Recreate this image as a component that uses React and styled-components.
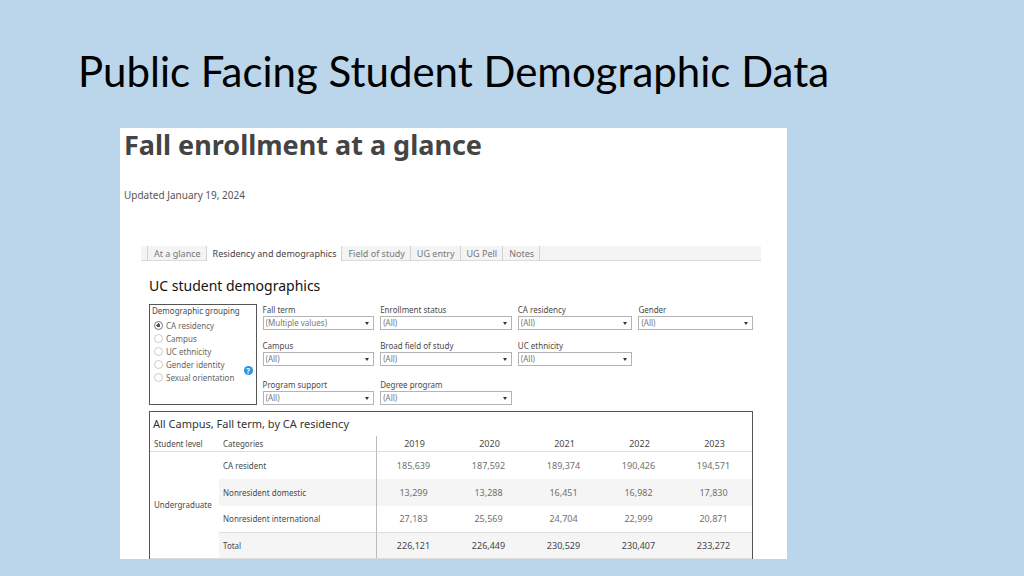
import React from "react";
import styled, { createGlobalStyle } from "styled-components";

const GlobalStyle = createGlobalStyle`
  * { box-sizing: border-box; }
  body {
    margin: 0;
    background: #bbd5eb;
    color: #4a4a4a;
    font-family: "Noto Sans", "Open Sans", sans-serif;
    font-size: 9px;
    line-height: 12px;
  }
`;

const Slide = styled.main`
  min-height: 100vh;
  padding: 39px 0 17px;
`;

const SlideTitle = styled.h1`
  margin: 0 78px 25px;
  color: #000;
  font-family: Lato, "Noto Sans", sans-serif;
  font-size: 42px;
  font-weight: 400;
  line-height: 64px;
`;

const Card = styled.article`
  margin: 0 237px 0 120px;
  background: #fff;
`;

const CardHeader = styled.header`
  padding: 0 4px;
`;

const CardTitle = styled.h2`
  margin: 0 0 26px;
  color: #444;
  font-size: 27px;
  font-weight: 700;
  line-height: 34px;
`;

const Updated = styled.p`
  margin: 0;
  color: #555;
  font-size: 10px;
  line-height: 14px;
`;

const Tabs = styled.nav`
  display: flex;
  height: 15px;
  margin: 44px 26px 0 21px;
  padding-left: 6px;
  background: #f4f4f4;
  border-bottom: 1px solid #dcdcdc;
`;

const Tab = styled.button`
  height: 15px;
  padding: 0 5px 0 6px;
  border: 0;
  border-right: 1px solid #d2d2d2;
  background: ${(p) => (p.$active ? "#fff" : "transparent")};
  color: ${(p) => (p.$active ? "#444" : "#777")};
  font: inherit;
  line-height: 13px;
  white-space: nowrap;
  &:first-child { border-left: 1px solid #d2d2d2; }
`;

const Dashboard = styled.section`
  margin: 0 34px 0 29px;
`;

const DashboardTitle = styled.h3`
  margin: 15px 0 8px;
  color: #111;
  font-size: 14px;
  font-weight: 400;
  line-height: 20px;
`;

const Controls = styled.div`
  display: grid;
  grid-template-columns: 107fr 111fr 131fr 114fr 114fr;
  grid-template-rows: 36px 39px 26px;
  column-gap: 6px;
  font-size: 8px;
`;

const Grouping = styled.fieldset`
  display: flex;
  grid-row: 1 / 4;
  min-width: 0;
  margin: 0;
  padding: 0 2px;
  border: 1px solid #555;
`;

const Choices = styled.div`
  display: flex;
  flex-direction: column;
  flex: 1;
  min-width: 0;
`;

const Legend = styled.span`
  height: 14px;
  white-space: nowrap;
`;

const Choice = styled.label`
  display: flex;
  align-items: center;
  gap: 3px;
  height: 13px;
  padding-left: 2px;
  color: #666;
  white-space: nowrap;
`;

const Radio = styled.input`
  appearance: none;
  flex: none;
  width: 9px;
  height: 9px;
  margin: 0;
  border: 1px solid #ccc;
  border-radius: 50%;
  &:checked {
    border-color: #777;
    background: radial-gradient(circle, #555 2px, #fff 2px);
  }
`;

const Help = styled.button`
  align-self: flex-end;
  flex: none;
  width: 9px;
  height: 9px;
  margin: 0 1px 29px 0;
  padding: 0;
  border: 0;
  border-radius: 50%;
  background: #2795e0;
  color: #fff;
  font: inherit;
  font-weight: 700;
  line-height: 9px;
`;

const Filter = styled.label`
  grid-column: ${(p) => p.$column};
  grid-row: ${(p) => p.$row};
  display: flex;
  flex-direction: column;
  min-width: 0;
  white-space: nowrap;
`;

const SelectFrame = styled.span`
  display: flex;
  align-items: center;
  border: 1px solid #b4b4b4;
  height: 14px;
  &::after {
    content: "";
    margin: 0 4px 0 -8px;
    border: 2px solid transparent;
    border-top: 3px solid #333;
    border-bottom: 0;
    pointer-events: none;
  }
`;

const Select = styled.select`
  appearance: none;
  width: 100%;
  height: 12px;
  padding: 0 12px 0 2px;
  border: 0;
  background: transparent;
  color: #777;
  font: inherit;
  line-height: 12px;
`;

const Report = styled.section`
  margin-top: 6px;
  padding-top: 4px;
  border: 1px solid #555;
  border-bottom: 0;
`;

const ReportTitle = styled.h4`
  margin: 0 0 4px 3px;
  color: #333;
  font-size: 11px;
  font-weight: 400;
  line-height: 16px;
`;

const Table = styled.table`
  width: 100%;
  border-collapse: separate;
  border-spacing: 0;
  table-layout: fixed;
  border-bottom: 1px solid #ddd;
`;

const LevelCol = styled.col`
  width: 69px;
`;

const CategoryCol = styled.col`
  width: 158px;
`;

const HeadCell = styled.th`
  height: 16px;
  padding: 0 4px;
  border-bottom: 1px solid #ddd;
  font-size: ${(p) => (p.$year ? 9 : 8)}px;
  font-weight: 400;
  text-align: ${(p) => (p.$year ? "center" : "left")};
`;

const CategoryHead = styled(HeadCell)`
  border-right: 1px solid #bbb;
`;

const LevelCell = styled.th`
  padding: 0 4px;
  font-size: 8px;
  font-weight: 400;
  text-align: left;
`;

const CategoryCell = styled.th`
  padding: 0 4px;
  border-right: 1px solid #bbb;
  font-size: 8px;
  font-weight: 400;
  text-align: left;
`;

const ValueCell = styled.td`
  padding: 0 2px 0 0;
  color: ${(p) => (p.$total ? "#444" : "#707070")};
  text-align: center;
`;

const Row = styled.tr`
  height: ${(p) => (p.$tall ? 27 : 26)}px;
  > ${CategoryCell}, > ${ValueCell} {
    background: ${(p) => (p.$shaded ? "#f5f5f5" : "#fff")};
    border-top: ${(p) => (p.$total ? "1px solid #ddd" : "0")};
  }
`;

const tabs = ["At a glance", "Residency and demographics", "Field of study", "UG entry", "UG Pell", "Notes"];
const groupings = ["CA residency", "Campus", "UC ethnicity", "Gender identity", "Sexual orientation"];
const filters = [
  { label: "Fall term", value: "(Multiple values)", column: 2, row: 1 },
  { label: "Enrollment status", value: "(All)", column: 3, row: 1 },
  { label: "CA residency", value: "(All)", column: 4, row: 1 },
  { label: "Gender", value: "(All)", column: 5, row: 1 },
  { label: "Campus", value: "(All)", column: 2, row: 2 },
  { label: "Broad field of study", value: "(All)", column: 3, row: 2 },
  { label: "UC ethnicity", value: "(All)", column: 4, row: 2 },
  { label: "Program support", value: "(All)", column: 2, row: 3 },
  { label: "Degree program", value: "(All)", column: 3, row: 3 },
];
const years = ["2019", "2020", "2021", "2022", "2023"];
const rows = [
  { name: "CA resident", values: ["185,639", "187,592", "189,374", "190,426", "194,571"] },
  { name: "Nonresident domestic", values: ["13,299", "13,288", "16,451", "16,982", "17,830"] },
  { name: "Nonresident international", values: ["27,183", "25,569", "24,704", "22,999", "20,871"] },
  { name: "Total", values: ["226,121", "226,449", "230,529", "230,407", "233,272"], total: true },
];

export default function App() {
  return (
    <>
      <GlobalStyle />
      <Slide>
        <SlideTitle>Public Facing Student Demographic Data</SlideTitle>
        <Card>
          <CardHeader>
            <CardTitle>Fall enrollment at a glance</CardTitle>
            <Updated>Updated January 19, 2024</Updated>
          </CardHeader>
          <Tabs>
            {tabs.map((t, i) => (
              <Tab key={t} type="button" $active={i === 1}>{t}</Tab>
            ))}
          </Tabs>
          <Dashboard>
            <DashboardTitle>UC student demographics</DashboardTitle>
            <Controls>
              <Grouping aria-labelledby="grouping-title">
                <Choices>
                  <Legend id="grouping-title">Demographic grouping</Legend>
                  {groupings.map((g, i) => (
                    <Choice key={g}>
                      <Radio type="radio" name="grouping" defaultChecked={i === 0} />
                      {g}
                    </Choice>
                  ))}
                </Choices>
                <Help type="button">?</Help>
              </Grouping>
              {filters.map((f) => (
                <Filter key={f.label} $column={f.column} $row={f.row}>
                  {f.label}
                  <SelectFrame>
                    <Select defaultValue={f.value}>
                      <option>{f.value}</option>
                    </Select>
                  </SelectFrame>
                </Filter>
              ))}
            </Controls>
            <Report>
              <ReportTitle>All Campus, Fall term, by CA residency</ReportTitle>
              <Table>
                <colgroup>
                  <LevelCol />
                  <CategoryCol />
                </colgroup>
                <thead>
                  <tr>
                    <HeadCell scope="col">Student level</HeadCell>
                    <CategoryHead scope="col">Categories</CategoryHead>
                    {years.map((y) => (
                      <HeadCell key={y} scope="col" $year>{y}</HeadCell>
                    ))}
                  </tr>
                </thead>
                <tbody>
                  {rows.map((r, i) => (
                    <Row key={r.name} $shaded={i % 2 === 1} $tall={i < 2} $total={r.total}>
                      {i === 0 && <LevelCell scope="rowgroup" rowSpan={4}>Undergraduate</LevelCell>}
                      <CategoryCell scope="row">{r.name}</CategoryCell>
                      {r.values.map((v) => (
                        <ValueCell key={v} $total={r.total}>{v}</ValueCell>
                      ))}
                    </Row>
                  ))}
                </tbody>
              </Table>
            </Report>
          </Dashboard>
        </Card>
      </Slide>
    </>
  );
}
